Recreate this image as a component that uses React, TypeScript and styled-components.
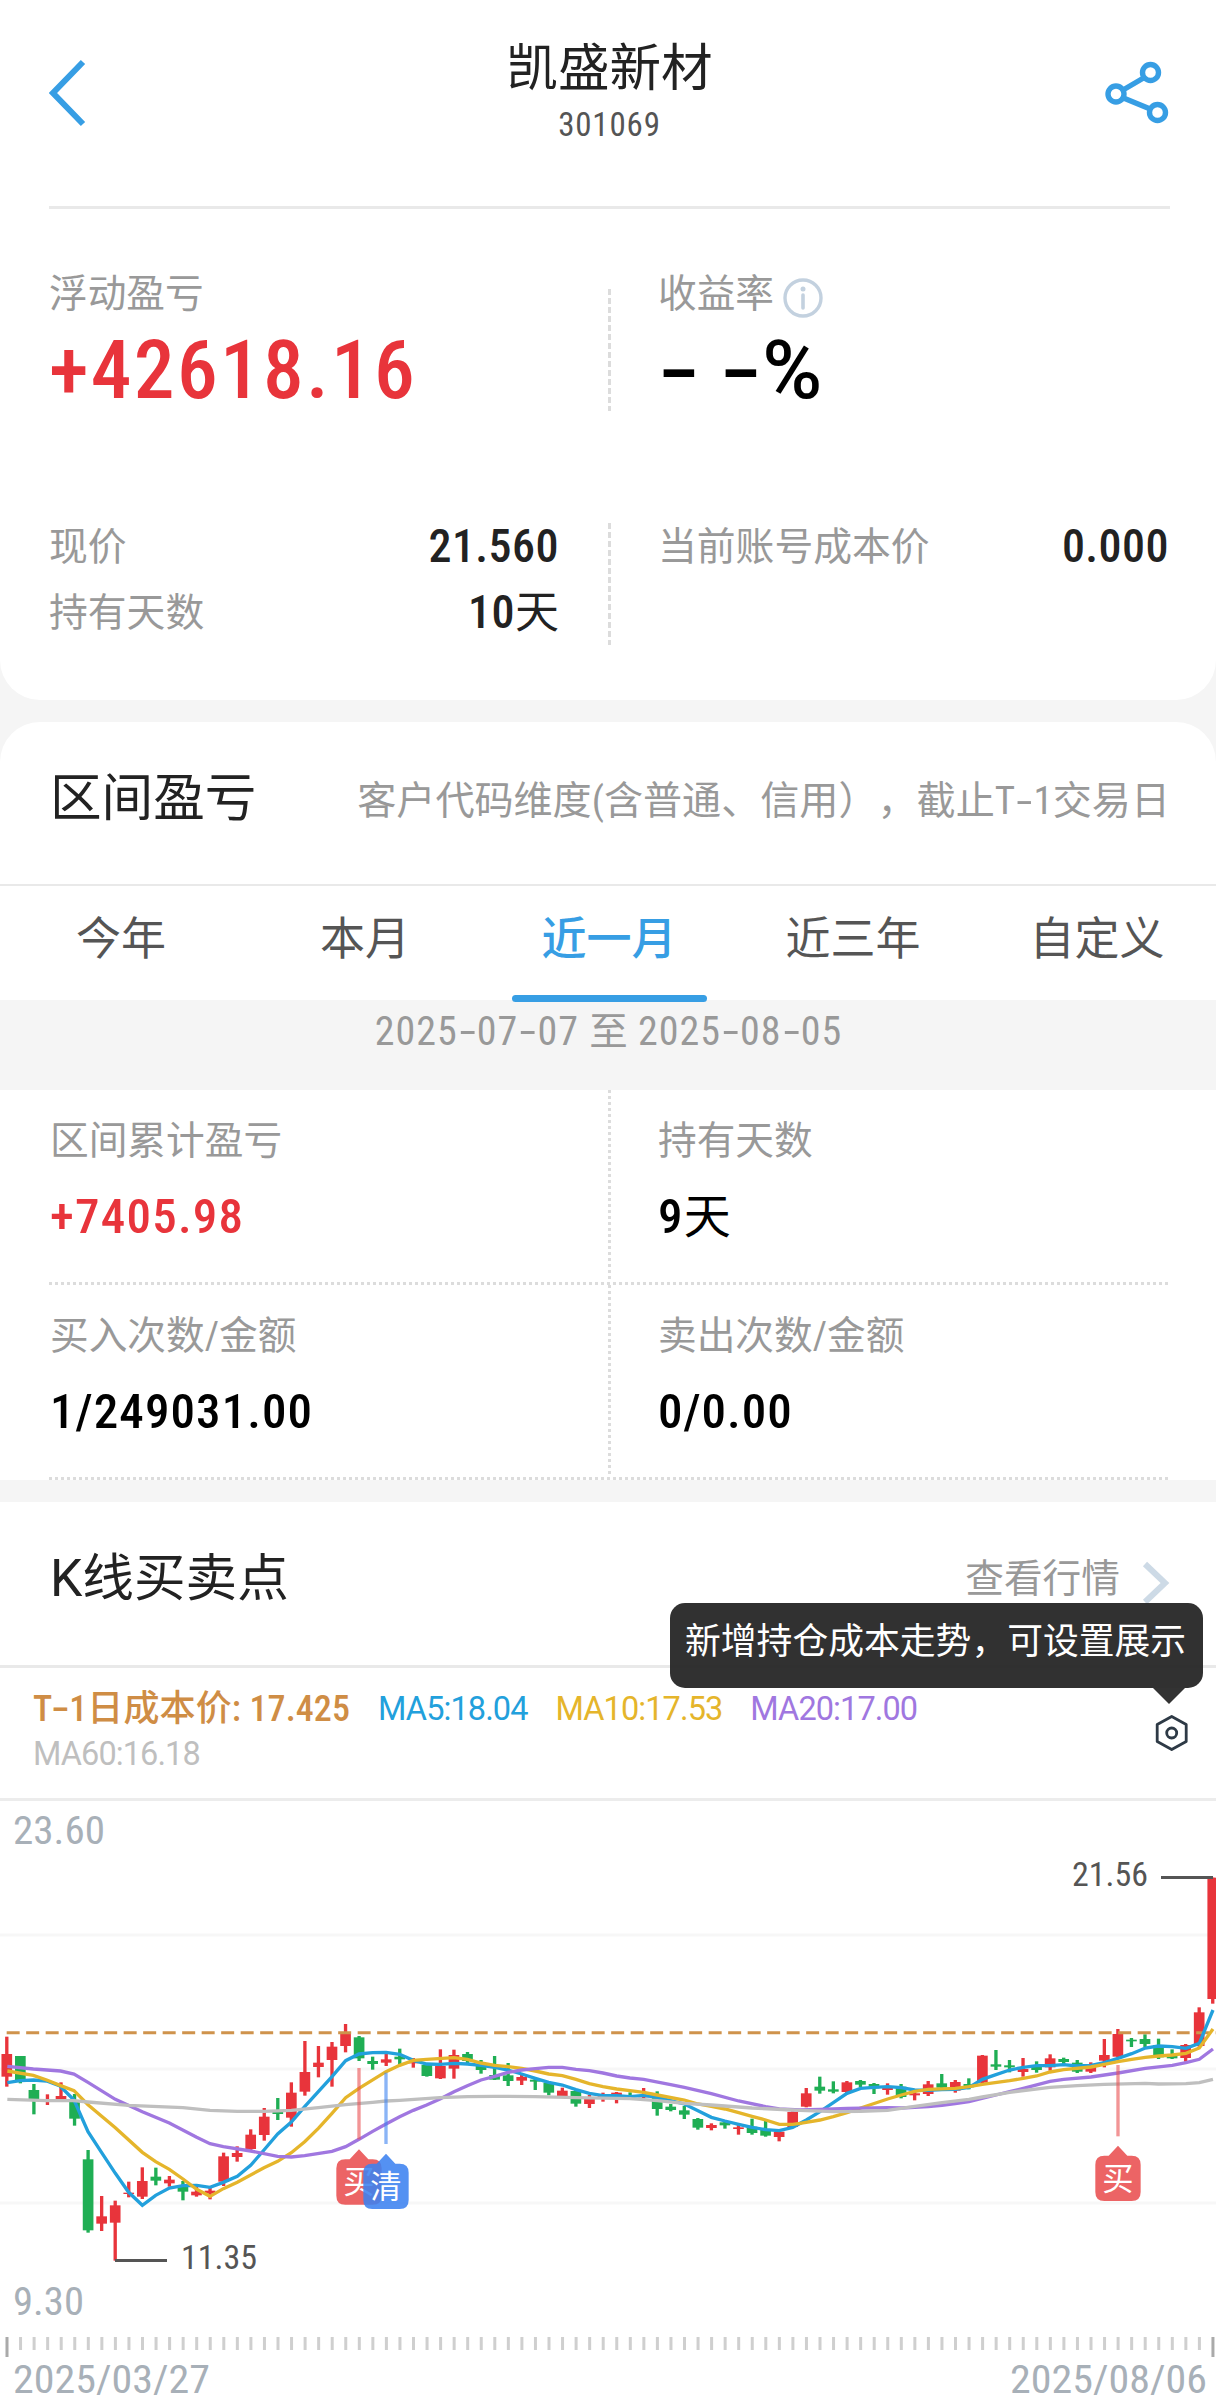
import React from 'react';
import styled, { createGlobalStyle } from 'styled-components';

const FONT = '"Roboto Condensed", Roboto, "Noto Sans CJK SC", sans-serif';
const WIDE_FONT = 'Roboto, "Noto Sans CJK SC", sans-serif';
const BLUE = '#379ee4';
const RED = '#e8343b';
const GREEN = '#1fae54';

const GlobalStyle = createGlobalStyle`
  * { box-sizing: border-box; }
  body { margin: 0; background: #f5f5f5; font-family: ${FONT}; color: #222; text-spacing-trim: space-all; }
`;

const Page = styled.main`
  width: 1216px;
  height: 2406px;
  overflow: hidden;
  display: flex;
  flex-direction: column;
  gap: 22px;
`;

const Card = styled.section<{ $height: number; $top?: boolean; $bottom?: boolean }>`
  height: ${p => p.$height}px;
  flex: none;
  background: #fff;
  border-radius: ${p => (p.$top ? '40px 40px' : '0 0')} ${p => (p.$bottom ? '40px 40px' : '0 0')};
`;

const Header = styled.header`
  height: 209px;
  margin: 0 46px 0 49px;
  border-bottom: 3px solid #e9e9e9;
  display: flex;
  justify-content: space-between;
`;

const BackIcon = styled.svg`
  width: 40px;
  height: 68px;
  margin-top: 59px;
`;

const ShareIcon = styled.svg`
  width: 66px;
  height: 66px;
  margin-top: 60px;
`;

const TitleBlock = styled.div`
  padding: 33px 0 0 26px;
  text-align: center;
`;

const StockName = styled.h1`
  margin: 0;
  font-size: 51.6px;
  font-weight: 400;
  line-height: 72px;
`;

const Num = styled.span<{ $size: number; $color?: string; $ls?: number; $weight?: number; $wide?: boolean }>`
  font-family: ${p => (p.$wide ? WIDE_FONT : FONT)};
  font-size: ${p => p.$size}px;
  color: ${p => p.$color ?? '#222'};
  letter-spacing: ${p => p.$ls ?? 0.025}em;
  font-weight: ${p => p.$weight ?? 500};
  white-space: pre;
`;

/* A hyphen as wide as a digit. */
const Dash = styled.span<{ $width?: number; $stretch?: number }>`
  display: inline-block;
  width: ${p => p.$width ?? 0.48}em;
  text-align: center;
  letter-spacing: 0;
  transform: scaleX(${p => p.$stretch ?? 1.7});
`;

const Cn = styled.span<{ $size: number }>`
  font-size: ${p => p.$size}px;
  font-weight: 400;
  letter-spacing: 0;
`;

const StockCode = styled.div`
  line-height: 40px;
`;

const Split = styled.div<{ $top: number }>`
  display: grid;
  grid-template-columns: 559px 3px 1fr;
  padding: 0 47px 0 49px;
  margin-top: ${p => p.$top}px;
`;

const DashedRule = styled.i<{ $top: number }>`
  height: 122px;
  margin-top: ${p => p.$top}px;
  background: repeating-linear-gradient(#dcdcdc 0 6px, transparent 6px 9px);
`;

const Left = styled.div`
  padding-right: 49px;
`;

const Right = styled.div`
  padding-left: 47px;
`;

const Label = styled.div`
  font-size: 38.7px;
  line-height: 50px;
  color: #999;
  white-space: nowrap;
  display: flex;
`;

const InfoIcon = styled.svg`
  width: 40px;
  height: 40px;
  margin: 9px 0 0 9px;
`;

const BigValue = styled.div`
  margin-top: 6px;
  line-height: 91px;
  height: 90px;
`;

const Pair = styled.div`
  display: flex;
  justify-content: space-between;
  height: 66px;
  line-height: 67px;
  font-size: 38.8px;
  color: #999;
`;

const SectionHead = styled.div<{ $pb: number; $line: number }>`
  display: flex;
  align-items: center;
  justify-content: space-between;
  height: ${p => 154 + p.$pb + p.$line}px;
  padding: 0 46px ${p => p.$pb}px 50px;
  border-bottom: ${p => p.$line}px solid #e9e9e9;
  position: relative;
`;

const SectionTitle = styled.h2`
  margin: 0;
  font-family: ${WIDE_FONT};
  font-size: 51.6px;
  font-weight: 400;
  line-height: 74px;
`;

const SectionNote = styled.span`
  font-size: 39.1px;
  color: #999;
  white-space: nowrap;
  padding-bottom: 4px;
`;

const Tabs = styled.nav`
  display: grid;
  grid-template-columns: repeat(5, 244px);
  height: 114px;
`;

const Tab = styled.div<{ $active?: boolean }>`
  position: relative;
  padding: 10px 2px 0 0;
  text-align: center;
  font-size: 45px;
  line-height: 88px;
  font-weight: ${p => (p.$active ? 500 : 400)};
  color: ${p => (p.$active ? BLUE : '#555')};
`;

const Indicator = styled.i`
  position: absolute;
  left: 24px;
  bottom: -2px;
  width: 195px;
  height: 7px;
  border-radius: 4px;
  background: ${BLUE};
`;

const DateBar = styled.div`
  height: 90px;
  line-height: 63px;
  padding-left: 1px;
  text-align: center;
  background: #f5f5f5;
  color: #999;
`;

const Stats = styled.div`
  padding: 0 46px 0 49px;
`;

const StatRow = styled.div`
  display: grid;
  grid-template-columns: 559px 3px 1fr;
  height: 192px;
`;

const DottedV = styled.i`
  background: repeating-linear-gradient(#dcdcdc 0 3px, transparent 3px 6px);
`;

const DottedH = styled.i`
  display: block;
  height: 3px;
  background: repeating-linear-gradient(90deg, #dcdcdc 0 3px, transparent 3px 6px);
`;

const Stat = styled.div<{ $right?: boolean }>`
  padding: 26px 0 0 ${p => (p.$right ? 47 : 1)}px;
`;

const StatValue = styled.div`
  margin-top: 20px;
  line-height: 61px;
  height: 60px;
`;

const QuoteLink = styled.a`
  display: flex;
  align-items: center;
  font-size: 38.7px;
  color: #999;
`;

const QuoteText = styled.span`
  padding-bottom: 9px;
`;

const Chevron = styled.svg`
  width: 28px;
  height: 44px;
  margin: 8px 0 0 22px;
`;

const Tooltip = styled.div`
  position: absolute;
  z-index: 2;
  left: 670px;
  top: 101px;
  width: 533px;
  height: 85px;
  border-radius: 15px;
  background: rgba(38, 38, 38, 0.95);
  color: #fff;
  font-size: 35.8px;
  line-height: 78px;
  padding-left: 15px;
  white-space: nowrap;
  &::after {
    content: '';
    position: absolute;
    left: 483px;
    top: 85px;
    border: 16px solid transparent;
    border-top-color: #333;
    border-bottom: 0;
  }
`;

const Legend = styled.div`
  display: flex;
  height: 133px;
  border-bottom: 3px solid #ececec;
  padding: 19px 25px 0 33px;
  justify-content: space-between;
`;

const LegendItems = styled.div`
  display: flex;
  flex-wrap: wrap;
  align-content: flex-start;
  column-gap: 28px;
  width: 960px;
  line-height: 45px;
`;

const GearIcon = styled.svg`
  width: 40px;
  height: 40px;
  margin-top: 26px;
`;

const ChartSvg = styled.svg`
  display: block;
  width: 1216px;
  height: 605px;
`;

/* Each candle: rising flag, high, body top, body bottom, low. */
type Candle = [number, number, number, number, number];
const candles: Candle[] = [
  [1, 170, 222, 290, 320], [0, 228, 228, 305, 310], [0, 312, 330, 357, 403], [1, 343, 358, 362, 375],
  [1, 307, 348, 358, 360], [0, 342, 365, 416, 437], [0, 510, 538, 751, 758], [1, 648, 709, 731, 753],
  [1, 662, 676, 728, 842], [1, 605, 638, 642, 652], [1, 562, 603, 650, 657], [0, 563, 590, 602, 616],
  [1, 588, 599, 610, 620], [0, 603, 618, 635, 661], [1, 612, 635, 646, 650], [1, 620, 632, 640, 658],
  [1, 518, 529, 605, 618], [1, 499, 519, 531, 545], [1, 448, 464, 507, 515], [1, 384, 410, 465, 482],
  [0, 354, 395, 402, 420], [1, 307, 338, 413, 440], [1, 183, 276, 335, 347], [1, 198, 248, 261, 292],
  [1, 186, 200, 240, 320], [1, 132, 160, 198, 217], [0, 168, 172, 235, 243], [0, 230, 243, 252, 269],
  [1, 220, 238, 248, 258], [0, 206, 230, 238, 255], [1, 234, 244, 250, 263], [0, 250, 255, 288, 290],
  [1, 208, 258, 295, 297], [1, 209, 225, 266, 296], [0, 216, 222, 243, 255], [0, 240, 255, 270, 281],
  [0, 228, 285, 299, 300], [0, 249, 286, 303, 318], [1, 280, 291, 302, 315], [0, 295, 299, 305, 330],
  [0, 304, 308, 338, 346], [1, 323, 332, 348, 350], [0, 328, 333, 371, 380], [1, 345, 357, 372, 384],
  [1, 338, 348, 354, 365], [1, 336, 338, 350, 370], [0, 337, 345, 350, 355], [1, 324, 345, 352, 355],
  [0, 334, 345, 387, 407], [0, 372, 380, 390, 394], [0, 378, 391, 404, 417], [0, 414, 417, 443, 449],
  [1, 430, 435, 444, 451], [0, 424, 427, 436, 446], [1, 430, 442, 447, 464], [0, 416, 440, 459, 464],
  [0, 422, 450, 467, 470], [1, 452, 455, 471, 484], [1, 394, 396, 441, 443], [1, 324, 340, 380, 382],
  [0, 290, 320, 332, 341], [0, 304, 328, 335, 340], [1, 303, 307, 336, 340], [0, 300, 303, 314, 322],
  [0, 309, 312, 325, 342], [1, 310, 324, 330, 344], [0, 312, 320, 351, 355], [1, 335, 340, 346, 361],
  [1, 303, 313, 342, 348], [0, 282, 310, 323, 328], [1, 300, 306, 332, 338], [0, 295, 312, 322, 328],
  [1, 225, 227, 308, 310], [0, 210, 253, 260, 270], [0, 240, 256, 262, 277], [1, 234, 267, 276, 290],
  [0, 244, 260, 270, 278], [1, 223, 235, 262, 272], [0, 233, 237, 246, 254], [0, 240, 248, 275, 279],
  [1, 247, 256, 275, 279], [1, 177, 225, 242, 262], [1, 147, 162, 230, 232], [0, 174, 179, 184, 201],
  [0, 163, 177, 192, 202], [0, 176, 195, 232, 237], [0, 208, 225, 235, 237], [1, 192, 195, 234, 245],
  [1, 82, 97, 198, 200], [1, -307, -307, 57, 71],
];

const averages: { color: string; points: string }[] = [
  {
    color: '#22a0dc',
    points:
      '22,308 60,302 100,300 140,303 180,318 222,360 264,455 305,518 346,580 386,637 427,676 467,646 508,624 549,617 590,616 630,622 670,607 712,589 752,556 792,510 833,462 874,426 914,380 955,335 996,290 1037,242 1077,222 1118,218 1158,217 1199,223 1240,241 1280,252 1320,253 1362,250 1402,252 1443,256 1484,262 1524,270 1565,282 1606,295 1646,307 1687,315 1728,329 1768,340 1809,347 1850,347 1890,350 1931,346 1972,352 2012,362 2053,372 2094,392 2134,412 2175,423 2216,433 2256,442 2297,449 2338,452 2378,442 2419,420 2460,395 2500,368 2541,340 2582,325 2622,322 2663,320 2704,323 2744,330 2785,331 2826,329 2866,328 2907,322 2947,298 2988,284 3029,270 3070,262 3110,257 3150,257 3191,254 3232,258 3273,256 3313,248 3354,235 3395,221 3436,204 3476,198 3517,200 3558,205 3598,190 3639,90',
  },
  {
    color: '#e5b52b',
    points:
      '22,273 100,286 140,300 180,316 222,332 264,374 346,443 427,517 467,545 508,568 549,597 590,628 630,649 670,626 712,607 792,563 833,544 874,518 914,485 955,445 996,400 1037,353 1077,325 1158,275 1199,256 1240,241 1280,238 1362,233 1402,238 1443,249 1484,256 1524,260 1565,265 1606,273 1646,282 1687,287 1728,298 1768,311 1809,320 1850,327 1890,332 1931,337 1972,345 2053,360 2094,372 2134,379 2175,387 2216,398 2256,409 2297,420 2338,433 2378,433 2400,430 2460,420 2500,410 2541,398 2582,384 2663,357 2704,345 2744,334 2785,328 2866,325 2907,320 2947,313 3029,302 3070,295 3110,288 3150,276 3191,269 3273,261 3313,253 3354,245 3395,238 3436,232 3476,228 3517,225 3558,220 3598,204 3639,147',
  },
  {
    color: '#a077e0',
    points:
      '22,259 100,267 182,273 222,282 264,307 346,358 427,395 508,429 590,472 630,491 670,500 752,513 833,529 874,531 914,527 996,514 1037,500 1077,478 1118,454 1158,432 1199,410 1240,391 1280,375 1320,357 1362,335 1402,317 1443,300 1484,289 1524,277 1565,270 1606,266 1646,262 1687,262 1728,268 1768,272 1809,279 1850,288 1890,294 1931,298 2012,314 2053,322 2134,341 2216,363 2297,380 2338,387 2400,390 2460,388 2541,385 2663,383 2704,384 2785,380 2826,376 2866,371 2907,365 2988,345 3029,335 3070,325 3150,304 3191,298 3273,291 3354,279 3436,265 3517,256 3558,248 3598,238 3639,207',
  },
  {
    color: '#bfbfbf',
    points:
      '22,358 140,362 222,362 264,366 386,376 549,383 630,391 712,394 792,394 874,391 955,383 1037,374 1118,367 1158,363 1199,361 1320,353 1402,350 1484,349 1606,350 1728,353 1890,356 1972,362 2053,370 2134,375 2256,384 2378,390 2400,391 2500,395 2582,394 2663,391 2744,379 2826,368 2907,358 2947,351 3029,337 3150,322 3232,317 3313,313 3436,310 3476,312 3558,311 3598,308 3639,298',
  },
];

const markers = [
  { x: 1077, line: 264, box: 538, color: '#e94e50', text: '买' },
  { x: 1158, line: 278, box: 551, color: '#3c82f0', text: '清' },
  { x: 3354, line: 255, box: 527, color: '#e94e50', text: '买' },
];

function AxisText(p: { x: number; y: number; w: number; size: number; fill: string; children: string }) {
  return (
    <text x={p.x} y={p.y} fontSize={p.size} fill={p.fill} fontFamily={FONT} textLength={p.w} lengthAdjust="spacingAndGlyphs">
      {p.children}
    </text>
  );
}

function KLineChart() {
  return (
    <ChartSvg viewBox="0 1801 1216 605">
      {[1935, 2069, 2203].map(y => (
        <rect key={y} x="0" y={y - 1.5} width="1216" height="3" fill="#f7f7f7" />
      ))}
      <g transform="translate(0 1980) scale(0.33333)">
        {candles.map(([up, high, top, bottom, low], i) => {
          const x = 20.4 + i * 40.65;
          return (
            <g key={i} fill={up ? RED : GREEN}>
              <rect x={x - 5} y={high} width="10" height={low - high} />
              <rect x={x - 16} y={top} width="32" height={bottom - top} />
            </g>
          );
        })}
        <line x1="20" x2="3648" y1="158" y2="158" stroke="#cf934c" strokeWidth="9" strokeDasharray="39 19.5" />
        {averages.map(a => (
          <polyline key={a.color} points={a.points} fill="none" stroke={a.color} strokeWidth="10" />
        ))}
        {markers.map(m => (
          <g key={m.x} fill={m.color}>
            <rect x={m.x - 5} y={m.line} width="10" height="214" opacity="0.6" />
            <g opacity="0.88">
              <path d={`M${m.x} ${m.box - 30} l28 30 h13 q27 0 27 27 v82 q0 27 -27 27 h-82 q-27 0 -27 -27 v-82 q0 -27 27 -27 h13z`} />
            </g>
            <text x={m.x} y={m.box + 102} fill="#fff" fontSize="94" fontFamily={FONT} textAnchor="middle">
              {m.text}
            </text>
          </g>
        ))}
      </g>
      <rect x="1161" y="1876" width="52" height="3" fill="#555" />
      <rect x="115" y="2259" width="52" height="3" fill="#555" />
      <AxisText x={1072} y={1886} w={76} size={32.5} fill="#555">21.56</AxisText>
      <AxisText x={181} y={2269} w={76} size={32.5} fill="#555">11.35</AxisText>
      <AxisText x={13} y={1844} w={92} size={39} fill="#a8b0b8">23.60</AxisText>
      <AxisText x={13} y={2315} w={71} size={39} fill="#a8b0b8">9.30</AxisText>
      {Array.from({ length: 90 }, (_, i) => {
        const edge = i === 0 || i === 89;
        return (
          <rect key={i} x={5.5 + i * 13.55} y="2337" width="3" height={edge ? 20 : 13} fill={edge ? '#aaa' : '#cfcfcf'} />
        );
      })}
      <AxisText x={13} y={2393} w={197} size={39} fill="#a8b0b8">2025/03/27</AxisText>
      <AxisText x={1010} y={2393} w={197} size={39} fill="#a8b0b8">2025/08/06</AxisText>
    </ChartSvg>
  );
}

function DateText({ children }: { children: string }) {
  return (
    <>
      {children.split('-').map((part, i) => (
        <React.Fragment key={i}>
          {i > 0 && <Dash>-</Dash>}
          {part}
        </React.Fragment>
      ))}
    </>
  );
}

export default function App() {
  return (
    <>
      <GlobalStyle />
      <Page>
        <Card $height={700} $bottom>
          <Header>
            <BackIcon viewBox="0 0 40 68">
              <path d="M34 3 L4 34 L34 65" fill="none" stroke={BLUE} strokeWidth="6" />
            </BackIcon>
            <TitleBlock>
              <StockName>凯盛新材</StockName>
              <StockCode><Num $size={33} $color="#555" $weight={400}>301069</Num></StockCode>
            </TitleBlock>
            <ShareIcon viewBox="0 0 66 66" fill="none" stroke={BLUE} strokeWidth="5.4">
              <path d="M19 30 L39.5 18 M19.5 38 L45 48.5" />
              <circle cx="12" cy="34" r="8" />
              <circle cx="46.5" cy="12.5" r="8" />
              <circle cx="53.5" cy="52.5" r="8" />
            </ShareIcon>
          </Header>
          <Split $top={60}>
            <Left>
              <Label>浮动盈亏</Label>
              <BigValue><Num $size={81.5} $color={RED} $ls={0.028}>+42618.16</Num></BigValue>
            </Left>
            <DashedRule $top={20} />
            <Right>
              <Label>
                收益率
                <InfoIcon viewBox="0 0 40 40" fill="none" stroke="#c3d1df">
                  <circle cx="20" cy="20" r="18" strokeWidth="3.4" />
                  <path d="M20 17 V30" strokeWidth="3.6" strokeLinecap="round" />
                  <circle cx="20" cy="11" r="2.5" fill="#c3d1df" stroke="none" />
                </InfoIcon>
              </Label>
              <BigValue>
                <Num $size={81.5} $color="#000" $ls={0} $wide>
                  <Dash $width={0.515} $stretch={1.45}>-</Dash>
                  {' '}
                  <Dash $width={0.515} $stretch={1.45}>-</Dash>
                  %
                </Num>
              </BigValue>
            </Right>
          </Split>
          <Split $top={98}>
            <Left>
              <Pair><span>现价</span><Num $size={46} $ls={0.01}>21.560</Num></Pair>
              <Pair><span>持有天数</span><Num $size={46} $ls={0.01}>10<Cn $size={44}>天</Cn></Num></Pair>
            </Left>
            <DashedRule $top={10} />
            <Right>
              <Pair><span>当前账号成本价</span><Num $size={46} $ls={0.01}>0.000</Num></Pair>
            </Right>
          </Split>
        </Card>

        <Card $height={758} $top>
          <SectionHead $pb={8} $line={2}>
            <SectionTitle>区间盈亏</SectionTitle>
            <SectionNote>客户代码维度(含普通、信用），截止T<Dash $width={0.47}>-</Dash>1交易日</SectionNote>
          </SectionHead>
          <Tabs>
            <Tab>今年</Tab>
            <Tab>本月</Tab>
            <Tab $active>近一月<Indicator /></Tab>
            <Tab>近三年</Tab>
            <Tab>自定义</Tab>
          </Tabs>
          <DateBar>
            <Num $size={40} $color="#999" $weight={400}>
              <DateText>2025-07-07</DateText> <Cn $size={38.5}>至</Cn> <DateText>2025-08-05</DateText>
            </Num>
          </DateBar>
          <Stats>
            <StatRow>
              <Stat>
                <Label>区间累计盈亏</Label>
                <StatValue><Num $size={49} $color={RED}>+7405.98</Num></StatValue>
              </Stat>
              <DottedV />
              <Stat $right>
                <Label>持有天数</Label>
                <StatValue><Num $size={49} $color="#000">9<Cn $size={47}>天</Cn></Num></StatValue>
              </Stat>
            </StatRow>
            <DottedH />
            <StatRow>
              <Stat>
                <Label>买入次数/金额</Label>
                <StatValue><Num $size={49} $color="#000" $ls={0.022}>1/249031.00</Num></StatValue>
              </Stat>
              <DottedV />
              <Stat $right>
                <Label>卖出次数/金额</Label>
                <StatValue><Num $size={49} $color="#000" $ls={0.02}>0/0.00</Num></StatValue>
              </Stat>
            </StatRow>
            <DottedH />
          </Stats>
        </Card>

        <Card $height={904}>
          <SectionHead $pb={9} $line={3}>
            <SectionTitle>K线买卖点</SectionTitle>
            <QuoteLink>
              <QuoteText>查看行情</QuoteText>
              <Chevron viewBox="0 0 28 44">
                <path d="M3 3 L23 22 L3 41" fill="none" stroke="#cddae6" strokeWidth="6" />
              </Chevron>
            </QuoteLink>
            <Tooltip>新增持仓成本走势，可设置展示</Tooltip>
          </SectionHead>
          <Legend>
            <LegendItems>
              <Num $size={36} $color="#cf8d45" $ls={0.003}>T<Dash $width={0.47}>-</Dash>1日成本价: 17.425</Num>
              <Num $size={32.5} $color="#22a0dc" $weight={400} $ls={-0.028} $wide>MA5:18.04</Num>
              <Num $size={32.5} $color="#e5b52b" $weight={400} $ls={-0.028} $wide>MA10:17.53</Num>
              <Num $size={32.5} $color="#a077e0" $weight={400} $ls={-0.028} $wide>MA20:17.00</Num>
              <Num $size={32.5} $color="#bfbfbf" $weight={400} $ls={-0.028} $wide>MA60:16.18</Num>
            </LegendItems>
            <GearIcon viewBox="0 0 40 40" fill="none" stroke="#2e3a46" strokeWidth="2.8" strokeLinejoin="round">
              <path d="M20.7 3.5 L35.2 11.5 V28.5 L20.7 36.5 L6.2 28.5 V11.5Z" />
              <circle cx="20.7" cy="20" r="5" />
            </GearIcon>
          </Legend>
          <KLineChart />
        </Card>
      </Page>
    </>
  );
}
